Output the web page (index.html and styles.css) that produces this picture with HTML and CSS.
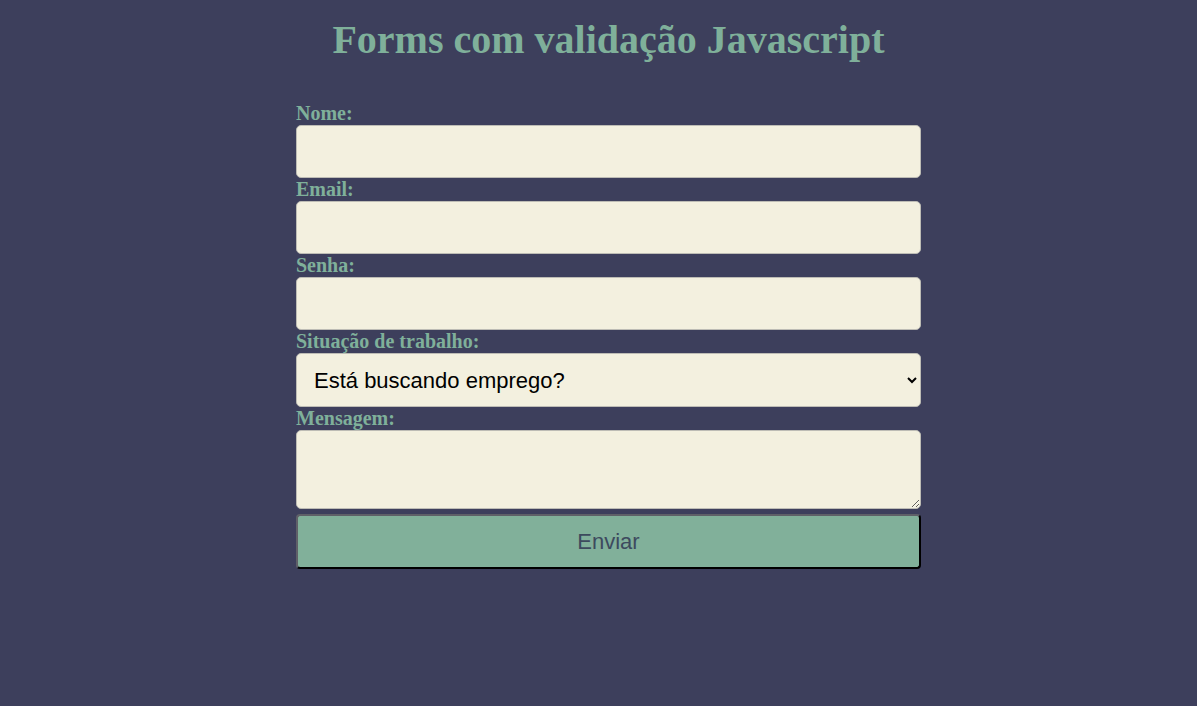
FILE: index.html
```html
<!DOCTYPE html>
<html lang="pt">
<head>
<meta charset="utf-8">
<title>Forms com validação Javascript</title>
<link rel="stylesheet" href="styles.css">
</head>
<body>
<main class="page">
  <h1 class="title">Forms com validação Javascript</h1>
  <form class="form">
    <label class="label" for="nome">Nome:</label>
    <input class="field" id="nome" type="text">
    <label class="label" for="email">Email:</label>
    <input class="field" id="email" type="email">
    <label class="label" for="senha">Senha:</label>
    <input class="field" id="senha" type="password">
    <label class="label" for="situacao">Situação de trabalho:</label>
    <select class="field select" id="situacao">
      <option>Está buscando emprego?</option>
    </select>
    <label class="label" for="mensagem">Mensagem:</label>
    <textarea class="field area" id="mensagem"></textarea>
    <button class="btn" type="submit">Enviar</button>
  </form>
</main>
</body>
</html>
```
FILE: styles.css
```css
html, body {
  margin: 0;
  padding: 0;
  background: #3d3f5c;
  height: 100%;
}
.page {
  display: flex;
  flex-direction: column;
  align-items: center;
  padding-left: 20px;
  font-family: "Liberation Serif", "Times New Roman", serif;
}
.title {
  margin: 17px 0 0;
  font-size: 40px;
  line-height: 46px;
  font-weight: bold;
  color: #7fb09a;
}
.form {
  width: 625px;
  display: flex;
  flex-direction: column;
  margin-top: 39px;
}
.label {
  display: block;
  font-size: 20px;
  line-height: 23px;
  height: 23px;
  font-weight: bold;
  color: #7fb09a;
  white-space: nowrap;
}
.field {
  box-sizing: border-box;
  width: 100%;
  height: 53px;
  margin: 0;
  background: #f3f0df;
  border: 1px solid #bdbcb5;
  border-radius: 5px;
  font-family: "Liberation Sans", Arial, sans-serif;
  font-size: 22px;
  color: #000;
  padding: 0 13px;
}
.select {
  height: 54px;
}
.area {
  height: 79px;
  resize: vertical;
  padding: 8px 13px;
}
.btn {
  box-sizing: border-box;
  width: 100%;
  height: 55px;
  margin-top: 5px;
  background: #81b09a;
  border-style: solid;
  border-width: 2px;
  border-color: #5f6068 #000 #000 #5f6068;
  border-radius: 4px;
  font-family: "Liberation Sans", Arial, sans-serif;
  font-size: 22px;
  color: #3d4a5e;
}
```
